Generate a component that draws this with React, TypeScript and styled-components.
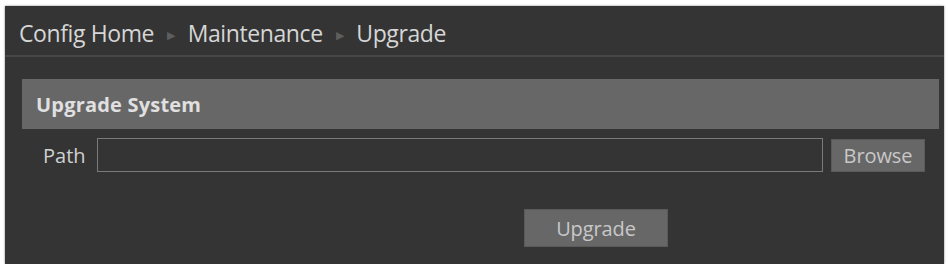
import React from "react";
import styled, { createGlobalStyle } from "styled-components";

const GlobalStyle = createGlobalStyle`
  html, body {
    margin: 0;
    padding: 0;
    background: #ffffff;
  }
  body {
    font-family: "Open Sans", "Liberation Sans", sans-serif;
  }
`;

const Panel = styled.div`
  margin: 6px 4px 0 5px;
  width: 939px;
  height: 258px;
  background-color: #343434;
  box-shadow: 0 0 2px rgba(0, 0, 0, 0.5);
  display: flex;
  flex-direction: column;
`;

const Breadcrumb = styled.div`
  height: 51px;
  box-sizing: border-box;
  padding: 4px 0 0 14px;
  display: flex;
  align-items: center;
  gap: 13px;
  border-bottom: 2px solid #474747;
  font-size: 23px;
  letter-spacing: -0.4px;
`;

const Crumb = styled.span`
  color: #d6d6d6;
`;

const Arrow = styled.span`
  color: #5e5e5e;
  font-size: 11px;
  padding-top: 3px;
`;

const Content = styled.div`
  padding: 22px 5px 0 17px;
  display: flex;
  flex-direction: column;
`;

const SectionHeader = styled.div`
  height: 50px;
  background-color: #676767;
  display: flex;
  align-items: center;
  padding-left: 14px;
  color: #e0e0e0;
  font-size: 20px;
  font-weight: 700;
  letter-spacing: 0.2px;
`;

const FieldRow = styled.div`
  margin-top: 9px;
  display: flex;
  align-items: center;
  padding-left: 21px;
`;

const Label = styled.span`
  width: 54px;
  color: #d0d0d0;
  font-size: 20px;
`;

const PathInput = styled.input`
  box-sizing: border-box;
  width: 726px;
  height: 34px;
  background-color: #343434;
  border: 1px solid #7a7a7a;
  outline: none;
  color: #ddd;
`;

const Button = styled.button<{ $w: number; $h: number }>`
  box-sizing: border-box;
  width: ${(p) => p.$w}px;
  height: ${(p) => p.$h}px;
  background-color: #676767;
  border: 1px solid #5a5a5a;
  color: #c8c8c8;
  font-family: "Open Sans", "Liberation Sans", sans-serif;
  font-size: 20px;
  letter-spacing: -0.1px;
  padding: 0;
  cursor: pointer;
`;

const BrowseButton = styled(Button)`
  margin-left: 8px;
`;

const Actions = styled.div`
  margin-top: 37px;
  display: flex;
  padding-left: 502px;
`;

export default function App() {
  return (
    <>
      <GlobalStyle />
      <Panel>
        <Breadcrumb>
          <Crumb>Config Home</Crumb>
          <Arrow>▶</Arrow>
          <Crumb>Maintenance</Crumb>
          <Arrow>▶</Arrow>
          <Crumb>Upgrade</Crumb>
        </Breadcrumb>
        <Content>
          <SectionHeader>Upgrade System</SectionHeader>
          <FieldRow>
            <Label>Path</Label>
            <PathInput type="text" />
            <BrowseButton $w={94} $h={33}>
              Browse
            </BrowseButton>
          </FieldRow>
          <Actions>
            <Button $w={144} $h={38}>Upgrade</Button>
          </Actions>
        </Content>
      </Panel>
    </>
  );
}
